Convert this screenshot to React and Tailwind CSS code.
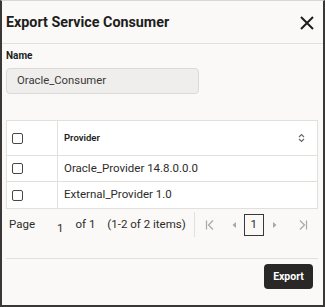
const Checkbox = () => (
  <span className="block w-[11px] h-[11px] border-[1.5px] border-[#4a4845] rounded-[2px] bg-white" />
);

const App = () => {
  return (
    <div
      className="w-[325px] h-[307px] bg-[#faf9f7] border-l-2 border-r-2 border-b-2 border-[#3a3836] border-t border-t-[#d8d6d3] text-[#201e1c] overflow-hidden"
      style={{ fontFamily: 'Roboto, "Noto Sans", sans-serif' }}
    >
      {/* Header */}
      <div className="h-[43px] flex items-center justify-between pl-[4px] pr-[8px] pt-[2px] border-b border-[#e2e0dd]">
        <h1 className="text-[14.3px] font-bold">Export Service Consumer</h1>
        <svg width="16" height="16" viewBox="0 0 16 16">
          <path d="M2 2L14 14M14 2L2 14" stroke="#201e1c" strokeWidth="2" />
        </svg>
      </div>

      <div className="px-[4px]">
        <div className="mt-[5px] text-[10px] font-bold leading-[14px]">Name</div>
        <div className="mt-[5px] w-[193px] h-[26px] rounded-[4px] bg-[#efeeec] border border-[#dcdad7] flex items-center pl-[10px] text-[11.3px] text-[#3a3836]">
          Oracle_Consumer
        </div>

        {/* Table */}
        <div className="mt-[26px] w-[312px] bg-white border border-[#e2e0dd] text-[11.5px]">
          <div className="flex h-[35px] border-b border-[#e2e0dd]">
            <div className="w-[51px] border-r border-[#e2e0dd] flex items-center pl-[5px]">
              <Checkbox />
            </div>
            <div className="flex-1 flex items-center justify-between pl-[6px] pr-[12px] text-[9.5px] font-semibold">
              <span>Provider</span>
              <svg width="7" height="10" viewBox="0 0 7 10">
                <path d="M1 4L3.5 1.5L6 4M1 6L3.5 8.5L6 6" stroke="#6b6966" strokeWidth="1.2" fill="none" />
              </svg>
            </div>
          </div>
          {["Oracle_Provider 14.8.0.0.0", "External_Provider 1.0"].map((p, i) => (
            <div key={p} className={`flex h-[26px] ${i === 0 ? "border-b border-[#e2e0dd]" : ""}`}>
              <div className="w-[51px] border-r border-[#e2e0dd] flex items-center pl-[5px]">
                <Checkbox />
              </div>
              <div className="flex-1 flex items-center pl-[6px] text-[#2e2c2a]">{p}</div>
            </div>
          ))}
        </div>

        {/* Pagination */}
        <div className="mt-[3px] h-[25px] flex items-center text-[11.5px] text-[#2e2c2a]">
          <span className="ml-[3px]">Page</span>
          <span className="ml-[22px] mt-[8px]">1</span>
          <span className="ml-[12px]">of 1</span>
          <span className="ml-[12px]">(1-2 of 2 items)</span>
          <span className="ml-[8px] w-px h-[25px] bg-[#e2e0dd]" />
          <svg width="10" height="12" viewBox="0 0 10 12" className="ml-[10px]">
            <path d="M1.5 1.5V10.5M8 1.5L3.5 6L8 10.5" stroke="#a9a7a4" strokeWidth="1.2" fill="none" />
          </svg>
          <svg width="6" height="8" viewBox="0 0 6 8" className="ml-[16px]">
            <path d="M5 1L1.5 4L5 7Z" fill="#a9a7a4" />
          </svg>
          <span className="ml-[7px] w-[20px] h-[22px] border border-[#3a3836] flex items-center justify-center text-[11.5px]">1</span>
          <svg width="6" height="8" viewBox="0 0 6 8" className="ml-[8px]">
            <path d="M1 1L4.5 4L1 7Z" fill="#a9a7a4" />
          </svg>
          <svg width="10" height="12" viewBox="0 0 10 12" className="ml-[20px]">
            <path d="M8.5 1.5V10.5M2 1.5L6.5 6L2 10.5" stroke="#a9a7a4" strokeWidth="1.2" fill="none" />
          </svg>
        </div>

        <div className="mt-[21px] w-[312px] border-t border-[#e2e0dd]" />

        <div className="flex justify-end pr-[6px] mt-[5px]">
          <button className="w-[49px] h-[25px] rounded-[4px] bg-[#2a2826] text-white text-[10.5px] font-bold">
            Export
          </button>
        </div>
      </div>
    </div>
  );
};

export default App;
